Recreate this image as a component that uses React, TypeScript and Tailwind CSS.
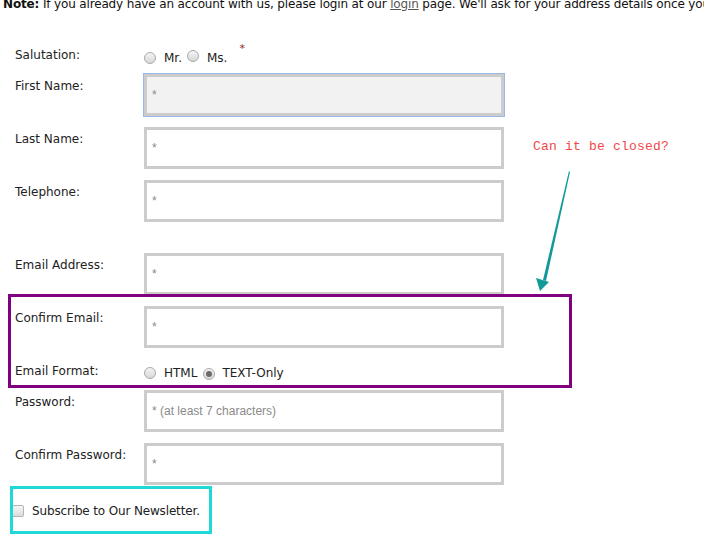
import React from 'react';

const Radio = ({ checked = false }: { checked?: boolean }) => (
    <span className="inline-flex w-[12px] h-[12px] rounded-full border border-[#a9a9a9] bg-gradient-to-b from-[#f4f4f4] to-[#d8d8d8] items-center justify-center shrink-0">
        {checked && <span className="w-[6px] h-[6px] rounded-full bg-[#6b6b6b]" />}
    </span>
);

const Field = ({ label, placeholder, focused = false, className = '' }: { label: string; placeholder: string; focused?: boolean; className?: string }) => (
    <div className={`flex ${className}`}>
        <label className="w-[129px] shrink-0 pt-[5px] text-[12px] leading-[14px] text-[#222]">{label}</label>
        <input
            type="text"
            placeholder={placeholder}
            className={`w-[360px] h-[42px] border-3 border-[#cccccc] px-[5px] text-[12px] font-['Liberation_Sans',Arial,sans-serif] placeholder:text-[#8a8a8a] ${focused ? 'bg-[#f2f2f2] outline outline-1 outline-[#99b8ec]' : 'bg-white outline-none'}`}
        />
    </div>
);

export default function App() {
    return (
        <div className="relative w-[704px] h-[555px] overflow-hidden bg-white font-['DejaVu_Sans',Verdana,sans-serif]">
            {/* Top note, cut at the window edge */}
            <p className="-mt-[3px] pl-[3px] whitespace-nowrap tracking-[-0.15px] text-[12px] leading-[14px] text-[#111]">
                <b>Note:</b> If you already have an account with us, please login at our{' '}
                <span className="underline text-[#555]">login</span> page. We'll ask for your address details once you have logged in.
            </p>

            <div className="pl-[15px]">
                <div className="flex items-center h-[20px] mt-[34px]">
                    <span className="w-[129px] shrink-0 text-[12px] text-[#222]">Salutation:</span>
                    <div className="flex items-center text-[12px] text-[#222] mt-[5px]">
                        <Radio />
                        <span className="ml-[8px]">Mr.</span>
                        <span className="ml-[5px]"><Radio /></span>
                        <span className="ml-[8px]">Ms.</span>
                        <span className="ml-[12px] -mt-[16px] text-[11px] text-[#8a2a1a]">*</span>
                    </div>
                </div>

                <Field label="First Name:" placeholder="*" focused className="mt-[9px]" />
                <Field label="Last Name:" placeholder="*" className="mt-[11px]" />
                <Field label="Telephone:" placeholder="*" className="mt-[11px]" />
                <Field label="Email Address:" placeholder="*" className="mt-[31px]" />
                <Field label="Confirm Email:" placeholder="*" className="mt-[11px]" />

                <div className="flex items-center h-[20px] mt-[14px]">
                    <span className="w-[129px] shrink-0 text-[12px] text-[#222] -mt-[3px]">Email Format:</span>
                    <div className="flex items-center text-[12px] text-[#222] mt-[1px]">
                        <Radio />
                        <span className="ml-[8px]">HTML</span>
                        <span className="ml-[6px]"><Radio checked /></span>
                        <span className="ml-[7px]">TEXT-Only</span>
                    </div>
                </div>

                <Field label="Password:" placeholder="* (at least 7 characters)" className="mt-[8px]" />
                <Field label="Confirm Password:" placeholder="*" className="mt-[11px]" />
            </div>

            <div className="flex items-center h-[20px] mt-[16px] pl-[12px]">
                <span className="w-[12px] h-[12px] rounded-[2px] border border-[#b5b5b5] bg-gradient-to-b from-[#f6f6f6] to-[#dcdcdc]" />
                <span className="ml-[8px] text-[12px] tracking-[-0.15px] text-[#222]">Subscribe to Our Newsletter.</span>
            </div>

            {/* Annotation overlays */}
            <div className="absolute left-[8px] top-[294px] w-[564px] h-[94px] border-3 border-[#800080] pointer-events-none" />
            <div className="absolute left-[10px] top-[486px] w-[202px] h-[48px] border-3 border-[#1fd8d8] pointer-events-none" />
            <span className="absolute left-[533px] top-[139px] text-[13px] leading-[16px] tracking-[0.2px] text-[#f04848] font-['Liberation_Mono','Courier_New',monospace]">
                Can it be closed?
            </span>
            <svg className="absolute left-0 top-0 pointer-events-none" width="704" height="555">
                <polygon points="569,171 570,172 546,281 543,280" fill="#129a98" />
                <polygon points="536,278 549,282 540,291" fill="#129a98" />
            </svg>
        </div>
    );
}
